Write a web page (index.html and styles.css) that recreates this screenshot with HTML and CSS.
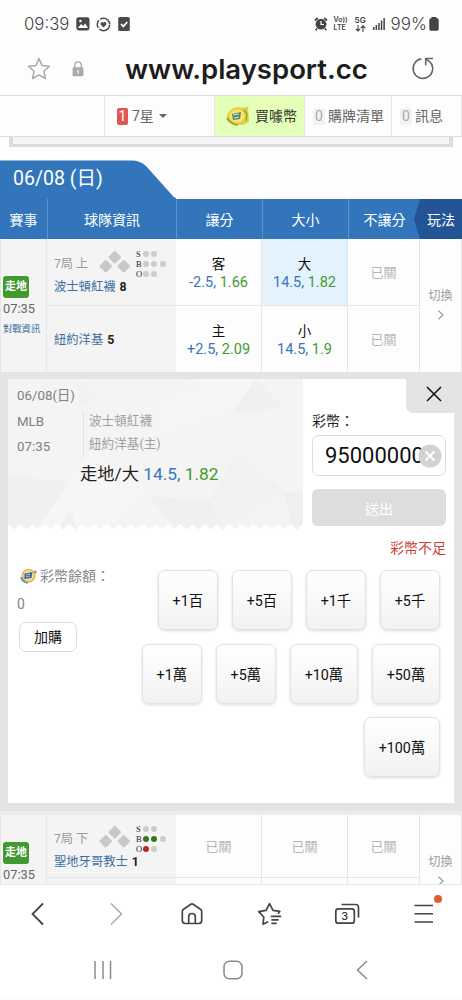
FILE: index.html
```html
<!DOCTYPE html>
<html lang="zh-Hant">
<head>
  <meta charset="UTF-8">
  <meta name="viewport" content="width=device-width, initial-scale=1">
  <title>www.playsport.cc</title>
  <link rel="stylesheet" href="styles.css">
</head>
<body>
  <div class="status-bar">
    <span class="clock">09:39</span>
    <svg class="st-photo" width="14" height="14" viewBox="0 0 14 14"><rect x=".3" y=".3" width="13.2" height="13.2" rx="2.4" fill="#4a4a4a"/><path d="M2 11l3-4 2.2 2 2-2.6L12 11z" fill="#fff"/><circle cx="4.4" cy="4" r="1.3" fill="#fff"/></svg>
    <svg class="st-heart" width="15" height="15" viewBox="0 0 15 15"><circle cx="7.5" cy="7.5" r="6.2" fill="none" stroke="#4a4a4a" stroke-width="1.5" stroke-dasharray="14 1.500 8 1.500 12.500 1.500"/><path d="M7.500 10.600L4.800 7.700a1.600 1.600 0 0 1 2.700-1.900 1.600 1.600 0 0 1 2.700 1.900z" fill="#4a4a4a"/></svg>
    <svg class="st-check" width="12" height="14" viewBox="0 0 12 14"><rect x=".2" width="11.6" height="14" rx="1.6" fill="#4a4a4a"/><path d="M3 7l2.3 2.4L9.3 5" fill="none" stroke="#fff" stroke-width="1.7"/></svg>
    <div class="status-right">
      <svg class="st-alarm" width="14" height="14" viewBox="0 0 14 14"><circle cx="7" cy="7.2" r="5.4" fill="#444"/><path d="M1 3.5L3.8 1M13 3.5L10.2 1M3 11.5l-1.3 1.7M11 11.5l1.3 1.7" stroke="#444" stroke-width="1.7"/><path d="M7 4v3.5h3" fill="none" stroke="#fff" stroke-width="1.2"/></svg>
      <span class="tiny">Vo))<br>LTE</span>
      <span class="tiny five">5G<svg width="11" height="7" viewBox="0 0 11 7"><path d="M3 0v6M.8 3.8L3 6l2.200-2.200M8 7V1M5.800 3L8 .8 10.200 3" fill="none" stroke="#444" stroke-width="1.1"/></svg></span>
      <svg class="st-signal" width="12" height="12" viewBox="0 0 12 12" fill="#444"><rect x="0" y="9" width="1.500" height="3"/><rect x="2.600" y="7" width="1.500" height="5"/><rect x="5.200" y="5" width="1.500" height="7"/><rect x="7.800" y="2.500" width="1.500" height="9.500"/><rect x="10.400" y="0" width="1.500" height="12"/></svg>
      <span class="battery">99%</span>
      <svg width="10" height="14" viewBox="0 0 10 14" fill="#444"><rect x="2.500" width="5" height="3"/><rect x=".3" y="1.300" width="9.400" height="12.400" rx="1.600"/></svg>
    </div>
  </div>

  <div class="url-bar">
    <svg class="ub-star" width="24" height="24" viewBox="0 0 24 24"><path d="M12 1.600l3 6.800 7.400.8-5.500 5 1.500 7.300L12 17.900l-6.400 3.600 1.500-7.300-5.500-5L9 8.400z" fill="none" stroke="#aaa" stroke-width="1.500" stroke-linejoin="round"/></svg>
    <svg class="ub-lock" width="12" height="16" viewBox="0 0 12 16"><path d="M2.800 7V4a3.200 3.200 0 0 1 6.400 0v3" fill="none" stroke="#aaa" stroke-width="1.300"/><rect x=".6" y="6.300" width="10.800" height="9" rx="1.200" fill="#aaa"/><path d="M6 9v3.500" stroke="#eee" stroke-width="1.500"/></svg>
    <span class="url">www.playsport.cc</span>
    <svg class="ub-reload" width="24" height="24" viewBox="0 0 24 24"><path d="M10.300 1.900A9.800 9.800 0 1 0 20.300 6.500Q18.800 4.600 14.800 1.800M14.700 8.200V1.500H22" fill="none" stroke="#666" stroke-width="1.600"/></svg>
  </div>

  <nav class="site-nav">
    <div class="nav-item blank"></div>
    <div class="nav-item member"><b class="badge">1</b>7星<i class="caret"></i></div>
    <div class="nav-item buy">
      <svg width="25" height="20" viewBox="0 0 25 20"><path d="M2 15C0 7 8 0 16 1.500l7-.5 1 15-6 3H7z" fill="#c6dc54"/><ellipse cx="13" cy="10" rx="10.500" ry="8.500" fill="#f0ce38"/><ellipse cx="12" cy="10" rx="7.500" ry="6.500" fill="#f5e676"/><path d="M7 8l9-2-1 7-7 1z" fill="#4d8578"/><path d="M8 9l6-1M9 12l5-1" stroke="#e9edab"/><path d="M2 12q4 6 11 7M19 4l3 4-1 7" fill="none" stroke="#92a928" stroke-width="1.500"/></svg>
      買噱幣
    </div>
    <div class="nav-item cart"><b class="badge zero">0</b>購牌清單</div>
    <div class="nav-item msg"><b class="badge zero">0</b>訊息</div>
  </nav>
  <div class="banner-edge"></div>

  <div class="date-tab">
    <svg width="176" height="39" viewBox="0 0 176 39"><path d="M0 .5H132Q140 .5 146 6L172 35Q174 38 176 38V39H0Z" fill="#3375ba"/></svg>
    <span>06/08 (日)</span>
  </div>

  <div class="grid table-head">
    <div>賽事</div>
    <div>球隊資訊</div>
    <div>讓分</div>
    <div>大小</div>
    <div>不讓分</div>
    <div class="play">玩法</div>
  </div>

  <section class="grid game">
    <div class="cell event">
      <span class="live">走地</span>
      <span class="time">07:35</span>
      <a class="versus">對戰資訊</a>
    </div>
    <div class="cell team team-away">
      <div class="inning">
        <span>7局 上</span>
        <svg class="bases" width="32" height="24" viewBox="0 0 32 24" fill="#c8c8c8"><rect x="11" y="2.500" width="9.500" height="9.500" rx="1" transform="rotate(45 15.750 7.250)"/><rect x="2" y="11.500" width="9.500" height="9.500" rx="1" transform="rotate(45 6.750 16.250)"/><rect x="20" y="11.500" width="9.500" height="9.500" rx="1" transform="rotate(45 24.750 16.250)"/></svg>
        <div class="counts">
          <div><s>S</s><i></i><i></i></div>
          <div><s>B</s><i></i><i></i><i></i></div>
          <div><s>O</s><i></i><i></i></div>
        </div>
      </div>
      <div class="name">波士頓紅襪 <b>8</b></div>
    </div>
    <div class="cell team team-home"><div class="name">紐約洋基 <b>5</b></div></div>
    <div class="cell odds c3 r1"><em>客</em><p><span>-2.5,</span> <span class="rate">1.66</span></p></div>
    <div class="cell odds c3 r2"><em>主</em><p><span>+2.5,</span> <span class="rate">2.09</span></p></div>
    <div class="cell odds c4 r1 active"><em>大</em><p><span>14.5,</span> <span class="rate">1.82</span></p></div>
    <div class="cell odds c4 r2"><em>小</em><p><span>14.5,</span> <span class="rate">1.9</span></p></div>
    <div class="cell closed c5 r1">已關</div>
    <div class="cell closed c5 r2">已關</div>
    <div class="cell switch">切換<svg width="8" height="10" viewBox="0 0 8 10"><path d="M1.500 .8L6 5 1.500 9.200" fill="none" stroke="#999" stroke-width="1.200"/></svg></div>
  </section>

  <section class="bet-wrap">
    <div class="bet-panel">
      <div class="slip">
        <div class="ticket">
          <svg class="ticket-bg" width="295" height="151" viewBox="0 0 295 151">
            <rect width="295" height="151" fill="#f4f4f4"/>
            <path d="M0 96L62 103 28 151H0z" fill="#f0f0f0"/>
            <path d="M62 103L82 72 140 109 100 151H28z" fill="#f6f6f6"/>
            <path d="M62 131l8 20H49z" fill="#efefef"/>
            <path d="M185 0h63l-24 34z" fill="#f6f6f6"/><path d="M248 0l28 29-52 5z" fill="#f0f0f0"/>
            <path d="M230 73l46 40-75 9z" fill="#f1f1f1"/><path d="M140 117l61 5 16 29h-46z" fill="#f0f0f0"/>
            <path d="M201 122l75-9-59 38z" fill="#f2f2f2"/><path d="M276 113h19v38h-10z" fill="#efefef"/>
            <path d="M120 40L185 0 224 34 150 60z" fill="#f5f5f5"/><path d="M70 0l22 20-22 8z" fill="#f2f2f2"/>
            <path d="M0 151V145L6.150 150.500 12.290 145 18.440 150.500 24.580 145 30.730 150.500 36.880 145 43 150.500 49.170 145 55.300 150.500 61.460 145 67.600 150.500 73.750 145 79.900 150.500 86 145 92.200 150.500 98.300 145 104.500 150.500 110.600 145 116.800 150.500 122.900 145 129 150.500 135.200 145 141.300 150.500 147.500 145 153.600 150.500 159.800 145 165.900 150.500 172 145 178.200 150.500 184.400 145 190.500 150.500 196.700 145 202.800 150.500 209 145 215.100 150.500 221.300 145 227.400 150.500 233.500 145 239.700 150.500 245.800 145 252 150.500 258.100 145 264.300 150.500 270.400 145 276.600 150.500 282.700 145 288.900 150.500 295 145V151Z" fill="#fff"/>
          </svg>
          <div class="ticket-info">
            <div class="when"><span>06/08(日)</span><span>MLB</span><span>07:35</span></div>
            <div class="match"><span>波士頓紅襪</span><span>紐約洋基(主)</span></div>
          </div>
          <div class="pick">走地/大 <span>14.5,</span> <span class="rate">1.82</span></div>
        </div>

        <div class="stake">
          <label>彩幣：</label>
          <div class="amount">
            <span>95000000</span>
            <svg class="clear" width="24" height="24" viewBox="0 0 24 24"><circle cx="12" cy="12" r="11.500" fill="#d2d2d2"/><path d="M7.500 7.500l9 9M16.500 7.500l-9 9" stroke="#fff" stroke-width="1.900"/></svg>
          </div>
          <button class="send">送出</button>
          <div class="error">彩幣不足</div>
        </div>
      </div>

      <div class="chips-area">
        <div class="balance">
          <div class="balance-title">
            <svg width="18" height="16" viewBox="0 0 18 16"><circle cx="8.500" cy="7.800" r="7" fill="#efb451"/><circle cx="8.500" cy="7.500" r="5.200" fill="#f8dfa0"/><path d="M4.500 5.500l8-1.500-1 6-7 1z" fill="#35679a"/><path d="M6 7l4-1M6 9l4-1" stroke="#d9e3dd" stroke-width=".8"/><path d="M1 9q1 5 7 6" fill="none" stroke="#5796c3" stroke-width="1.700"/><path d="M14 2l3 2-2 2" fill="#568cab"/></svg>
            彩幣餘額：
          </div>
          <div class="balance-value">0</div>
          <button class="topup">加購</button>
        </div>
        <div class="chips">
          <button>+1百</button><button>+5百</button><button>+1千</button><button>+5千</button>
          <button>+1萬</button><button>+5萬</button><button>+10萬</button><button>+50萬</button>
          <button>+100萬</button>
        </div>
      </div>
    </div>
    <div class="close">
      <svg width="16" height="16" viewBox="0 0 16 16"><path d="M1 1l14 14M15 1L1 15" stroke="#111" stroke-width="1.500"/></svg>
    </div>
  </section>

  <section class="grid game game-next">
    <div class="cell event">
      <span class="live">走地</span>
      <span class="time">07:35</span>
    </div>
    <div class="cell team team-away">
      <div class="inning">
        <span>7局 下</span>
        <svg class="bases" width="32" height="24" viewBox="0 0 32 24" fill="#c8c8c8"><rect x="11" y="2.500" width="9.500" height="9.500" rx="1" transform="rotate(45 15.750 7.250)"/><rect x="2" y="11.500" width="9.500" height="9.500" rx="1" transform="rotate(45 6.750 16.250)"/><rect x="20" y="11.500" width="9.500" height="9.500" rx="1" transform="rotate(45 24.750 16.250)"/></svg>
        <div class="counts">
          <div><s>S</s><i></i><i></i></div>
          <div><s>B</s><i class="ball"></i><i class="ball"></i><i></i></div>
          <div><s>O</s><i class="out"></i><i></i></div>
        </div>
      </div>
      <div class="name">聖地牙哥教士 <b>1</b></div>
    </div>
    <div class="cell team team-home"></div>
    <div class="cell closed c3 r1">已關</div>
    <div class="cell closed c3 r2"></div>
    <div class="cell closed c4 r1">已關</div>
    <div class="cell closed c4 r2"></div>
    <div class="cell closed c5 r1">已關</div>
    <div class="cell closed c5 r2"></div>
    <div class="cell switch">切換<svg width="8" height="10" viewBox="0 0 8 10"><path d="M1.500 .8L6 5 1.500 9.200" fill="none" stroke="#999" stroke-width="1.200"/></svg></div>
  </section>

  <div class="toolbar">
    <svg width="30" height="30" viewBox="0 0 30 30"><path d="M20 4.500L9.500 15 20 25.500" fill="none" stroke="#444" stroke-width="1.800"/></svg>
    <svg width="30" height="30" viewBox="0 0 30 30"><path d="M11 4.500L21.500 15 11 25.500" fill="none" stroke="#aaa" stroke-width="1.500"/></svg>
    <svg width="30" height="30" viewBox="0 0 30 30" fill="none" stroke="#444" stroke-width="1.700"><path d="M5.300 12.500Q5.300 11.300 6.300 10.500L13.800 5.200Q15 4.500 16.200 5.200L23.700 10.500Q24.700 11.300 24.700 12.500V21.500Q24.700 24.500 21.700 24.500H8.300Q5.300 24.500 5.300 21.500Z"/><path d="M11.700 24.500V17.500Q11.700 14.500 15 14.500T18.300 17.500V24.500" /></svg>
    <svg width="30" height="30" viewBox="0 0 30 30" fill="none" stroke="#444" stroke-width="1.700" stroke-linejoin="round" stroke-linecap="round"><path d="M12.500 23L8 25.200 8.800 18 3.700 12.700 11 11.300 14.500 4.700 18 11.300 24.800 12.300 23.500 14.200M16.500 17.300h9M17 20.800h6M17 24.300h4"/></svg>
    <div class="tabs">
      <svg width="30" height="30" viewBox="0 0 30 30" fill="none" stroke="#444" stroke-width="1.700"><rect x="3.800" y="9.800" width="18.500" height="14.400" rx="2.500"/><path d="M9.500 5.500H23.500Q26.500 5.500 26.500 8.500V18.500"/></svg>
      <span>3</span>
    </div>
    <div class="menu">
      <svg width="30" height="30" viewBox="0 0 30 30"><path d="M5.500 6.500H24M5.500 14.700H24M5.500 23H24" stroke="#444" stroke-width="1.600"/></svg>
      <i class="dot"></i>
    </div>
  </div>

  <div class="system-nav">
    <svg width="20" height="20" viewBox="0 0 20 20"><path d="M2 1v18M10 1v18M17.500 1v18" stroke="#8a8a8a" stroke-width="1.500"/></svg>
    <svg width="20" height="20" viewBox="0 0 20 20"><rect x="1" y="1.300" width="18" height="17.500" rx="5.500" fill="none" stroke="#8a8a8a" stroke-width="1.500"/></svg>
    <svg width="20" height="20" viewBox="0 0 20 20"><path d="M15 1L5.500 10 15 19" fill="none" stroke="#8a8a8a" stroke-width="1.500"/></svg>
  </div>
</body>
</html>
```
FILE: styles.css
```css
:root {
  --blue: #3375ba;
  --blue-dark: #225496;
  --link: #3c6f9f;
  --green: #419a2f;
  --line: #e6e6e6;
}

* {
  margin: 0;
  padding: 0;
  box-sizing: border-box;
}

body {
  width: 462px;
  height: 1000px;
  overflow: hidden;
  background: #fdfdfd;
  color: #222;
  font-family: Roboto, "Noto Sans CJK TC", sans-serif;
  font-size: 14px;
  line-height: 20px;
}

svg {
  display: block;
  flex: none;
}

button {
  font: inherit;
  color: #111;
}

/* phone status bar */
.status-bar {
  height: 48px;
  padding: 0 23px 0 24px;
  display: flex;
  align-items: center;
  color: #444;
}

.clock {
  width: 52px;
  font: 300 16.800px/20px Inter, sans-serif;
}

.st-heart {
  margin: 0 7px 0 6px;
}

.status-right {
  margin-left: auto;
  display: flex;
  align-items: center;
}

.tiny {
  width: 20px;
  margin-left: 6px;
  font: 600 7px/8px Inter, sans-serif;
}

.tiny.five {
  width: 18px;
  margin-left: 1px;
  font-size: 8px;
}

.tiny.five svg {
  margin-top: 1px;
}

.battery {
  margin: 0 2px 0 6px;
  font: 300 17px/20px Inter, sans-serif;
}

/* address bar */
.url-bar {
  height: 47px;
  padding: 0 27px 6px;
  display: flex;
  align-items: center;
}

.ub-lock {
  margin-left: 21px;
}

.url {
  margin-left: 41px;
  font: 600 27.500px/32px Inter, sans-serif;
  color: #1d1d1d;
  white-space: nowrap;
}

.ub-reload {
  margin-left: auto;
}

.site-nav {
  height: 42px;
  display: flex;
  border-top: 1px solid #dedede;
  border-bottom: 1px solid #dedede;
  color: #666;
}

.nav-item {
  display: flex;
  align-items: center;
  border-right: 1px solid var(--line);
  white-space: nowrap;
}

.blank {
  width: 105px;
}

.member {
  width: 110px;
  padding-left: 12px;
}

.badge {
  width: 11px;
  height: 17px;
  margin-right: 4px;
  border-radius: 2px;
  background: #e05555;
  color: #fff;
  font-weight: 400;
  line-height: 17px;
  text-align: center;
}

.badge.zero {
  width: 12px;
  margin-right: 3px;
  background: #f2f2f2;
  color: #aaa;
}

.caret {
  margin-left: 5px;
  border: 4px solid transparent;
  border-top-color: #666;
  border-bottom: 0;
}

.buy {
  width: 90px;
  padding-left: 10px;
  gap: 5px;
  background: #e4ffb8;
  color: #333;
}

.cart {
  width: 87px;
  padding-left: 8px;
}

.msg {
  width: 70px;
  padding-left: 8px;
}

.banner-edge {
  height: 10px;
  margin: 0 9px;
  border: solid #dcdcdc;
  border-width: 0 4px 3px;
  background: #f5f5f5;
}

/* date tab */
.date-tab {
  position: relative;
  height: 39px;
  margin-top: 13px;
}

.date-tab span {
  position: absolute;
  left: 13px;
  top: 6px;
  color: #fff;
  font-size: 19.500px;
  line-height: 26px;
}

.grid {
  display: grid;
  grid-template-columns: 47px 129px 86px 86px 72px 42px;
}

.table-head {
  height: 40px;
  grid-template-rows: 40px;
  background: var(--blue);
  color: #fff;
  line-height: 42px;
  text-align: center;
}

.table-head div + div {
  border-left: 1px solid #5c94ce;
}

.table-head .play {
  margin-left: -6px;
  padding-left: 6px;
  border: 0;
  background: var(--blue-dark);
  clip-path: polygon(6px 0, 100% 0, 100% 100%, 6px 100%, 0 50%);
}

/* game rows */
.game {
  grid-template-rows: 67px 66px;
}

.cell {
  border-right: 1px solid var(--line);
  border-bottom: 1px solid var(--line);
  min-width: 0;
}

.event {
  grid-row: 1 / 3;
  padding: 37px 0 0 2px;
  display: flex;
  flex-direction: column;
  align-items: flex-start;
  background: #f4f4f4;
  border-left: 1px solid var(--line);
  border-bottom: 0;
}

.live {
  width: 26px;
  height: 22px;
  border-radius: 3px;
  background: var(--green);
  color: #fff;
  font-size: 11px;
  font-weight: 700;
  line-height: 22px;
  text-align: center;
}

.time {
  margin-top: 1px;
  color: #666;
  font-size: 12.800px;
}

.versus {
  color: var(--link);
  font-size: 9.300px;
  white-space: nowrap;
}

.team {
  grid-column: 2;
  padding-left: 7px;
  background: #f4f4f4;
  border-right: 0;
}

.team-away {
  grid-row: 1;
  padding-top: 10px;
}

.team-home {
  grid-row: 2;
  padding-top: 25px;
  border-bottom: 0;
}

.inning {
  height: 29px;
  display: flex;
  align-items: center;
  color: #999;
  font-size: 12.200px;
  white-space: nowrap;
}

.inning span {
  width: 45px;
}

.bases {
  margin-bottom: 4px;
}

.counts {
  margin: 0 0 0 5px;
}

.counts div {
  height: 10px;
  display: flex;
  align-items: center;
  font: 8.500px/10px "Liberation Serif", serif;
  color: #222;
}

.counts s {
  width: 7px;
  text-decoration: none;
}

.counts i {
  width: 6px;
  height: 6px;
  margin-right: 2.300px;
  border-radius: 50%;
  background: #ccc;
}

.counts .ball {
  background: #3a7421;
}

.counts .out {
  background: #b32a25;
}

.name {
  color: var(--link);
  font-size: 12.300px;
  line-height: 19px;
  white-space: nowrap;
}

.name b {
  margin-left: 1px;
  color: #222;
}

.odds {
  padding-top: 16px;
  text-align: center;
}

.odds em {
  display: block;
  color: #111;
  font-size: 13.500px;
  font-style: normal;
  line-height: 19px;
}

.odds p {
  color: #3d74b5;
  font-size: 14.500px;
  line-height: 18px;
}

.odds .rate,
.pick .rate {
  color: var(--green);
}

.active {
  background: #e4f2fd;
}

.closed {
  display: flex;
  align-items: center;
  justify-content: center;
  padding-top: 2px;
  color: #b5b5b5;
  font-size: 13px;
}

.c3 { grid-column: 3; }
.c4 { grid-column: 4; }
.c5 { grid-column: 5; }
.r1 { grid-row: 1; }
.r2 { grid-row: 2; border-bottom: 0; }

.switch {
  grid-column: 6;
  grid-row: 1 / 3;
  display: flex;
  flex-direction: column;
  align-items: center;
  justify-content: center;
  gap: 4px;
  padding-bottom: 5px;
  border-bottom: 0;
  color: #999;
  font-size: 12px;
}

/* betting panel */
.bet-wrap {
  position: relative;
  height: 439px;
  padding: 7px 8px 8px;
  background: #e4e4e4;
}

.bet-panel {
  height: 424px;
  background: #fff;
}

.slip {
  display: flex;
}

.ticket {
  position: relative;
  width: 295px;
  height: 151px;
  padding: 7px 0 0 9px;
}

.ticket-bg {
  position: absolute;
  left: 0;
  top: 0;
}

.ticket-info {
  position: relative;
  display: flex;
  color: #808080;
}

.when {
  width: 66px;
  display: flex;
  flex-direction: column;
  gap: 5.500px;
  white-space: nowrap;
  font-size: 13.300px;
}

.match {
  height: 46px;
  margin-top: 25px;
  padding-left: 5px;
  display: flex;
  flex-direction: column;
  gap: 3px;
  border-left: 1px solid #e2e2e2;
  color: #a0a0a0;
  font-size: 12.600px;
}

.pick {
  position: relative;
  margin: 4px 0 0 63px;
  font-size: 17.300px;
  line-height: 26px;
}

.pick span {
  color: #3c74c2;
}

.stake {
  width: 134px;
  margin-left: 9px;
  padding-top: 32px;
}

.stake label {
  display: block;
}

.amount {
  height: 41px;
  margin-top: 4px;
  padding: 0 4px 0 12px;
  display: flex;
  align-items: center;
  border: 1px solid #ddd;
  border-radius: 7px;
  color: #111;
  font-size: 22px;
}

.amount span {
  width: 99px;
}

/* sits over the end of a long amount */
.clear {
  position: relative;
  margin-left: -6px;
}

.send {
  width: 134px;
  height: 37px;
  margin-top: 13px;
  padding-top: 2px;
  display: block;
  border: 0;
  border-radius: 6px;
  background: #ddd;
  color: #fff;
}

.error {
  margin-top: 12px;
  color: #cc4238;
  text-align: right;
}

.chips-area {
  padding: 12px 14px 0 9px;
  display: flex;
  justify-content: space-between;
}

.balance {
  width: 110px;
  color: #888;
  white-space: nowrap;
}

.balance-title {
  margin-left: 3px;
  margin-top: -4px;
  display: flex;
  align-items: center;
  gap: 2px;
}

.balance-value {
  margin-top: 8px;
}

.topup {
  width: 58px;
  height: 30px;
  margin: 8px 0 0 2px;
  border: 1px solid #ddd;
  border-radius: 7px;
  background: #fff;
}

.chips {
  width: 310px;
  display: flex;
  flex-wrap: wrap;
  justify-content: flex-end;
  gap: 13.600px 14px;
}

.chips button {
  height: 60px;
  padding: 2px 13.800px 0;
  border: 1px solid #e2e2e2;
  border-radius: 7px;
  background: linear-gradient(#fff, #f2f2f2);
  box-shadow: 0 1px 3px rgba(0, 0, 0, 0.15);
  font-size: 14.300px;
}

.close {
  position: absolute;
  right: 0;
  top: 7px;
  width: 56px;
  height: 34px;
  padding: 7px 0 0 20px;
  border-radius: 0 0 0 7px;
  background: #e4e4e4;
}

.game-next {
  height: 74px;
  padding-top: 4px;
  grid-template-rows: 63px 7px;
  background: linear-gradient(#ececec 4px, transparent 4px);
  border-bottom: 1px solid var(--line);
  overflow: hidden;
}

.game-next .event {
  padding-top: 27px;
}

.game-next .team-away {
  padding-top: 9px;
}

.game-next .team-home {
  padding-top: 0;
}

.game-next .switch {
  padding-top: 37px;
  justify-content: flex-start;
}

/* browser toolbar */
.toolbar {
  height: 58px;
  padding: 0 23px;
  display: flex;
  align-items: center;
  justify-content: space-between;
  background: #fff;
}

.tabs,
.menu {
  position: relative;
}

.tabs span {
  position: absolute;
  left: 4px;
  top: 9px;
  width: 18px;
  font: 500 11px/17px Inter, sans-serif;
  color: #333;
  text-align: center;
}

.dot {
  position: absolute;
  right: -3px;
  top: -4px;
  width: 8px;
  height: 8px;
  border-radius: 50%;
  background: #d86231;
}

.system-nav {
  height: 54px;
  padding: 0 90px 0 93px;
  display: flex;
  align-items: center;
  justify-content: space-between;
  background: #fff;
}
```
